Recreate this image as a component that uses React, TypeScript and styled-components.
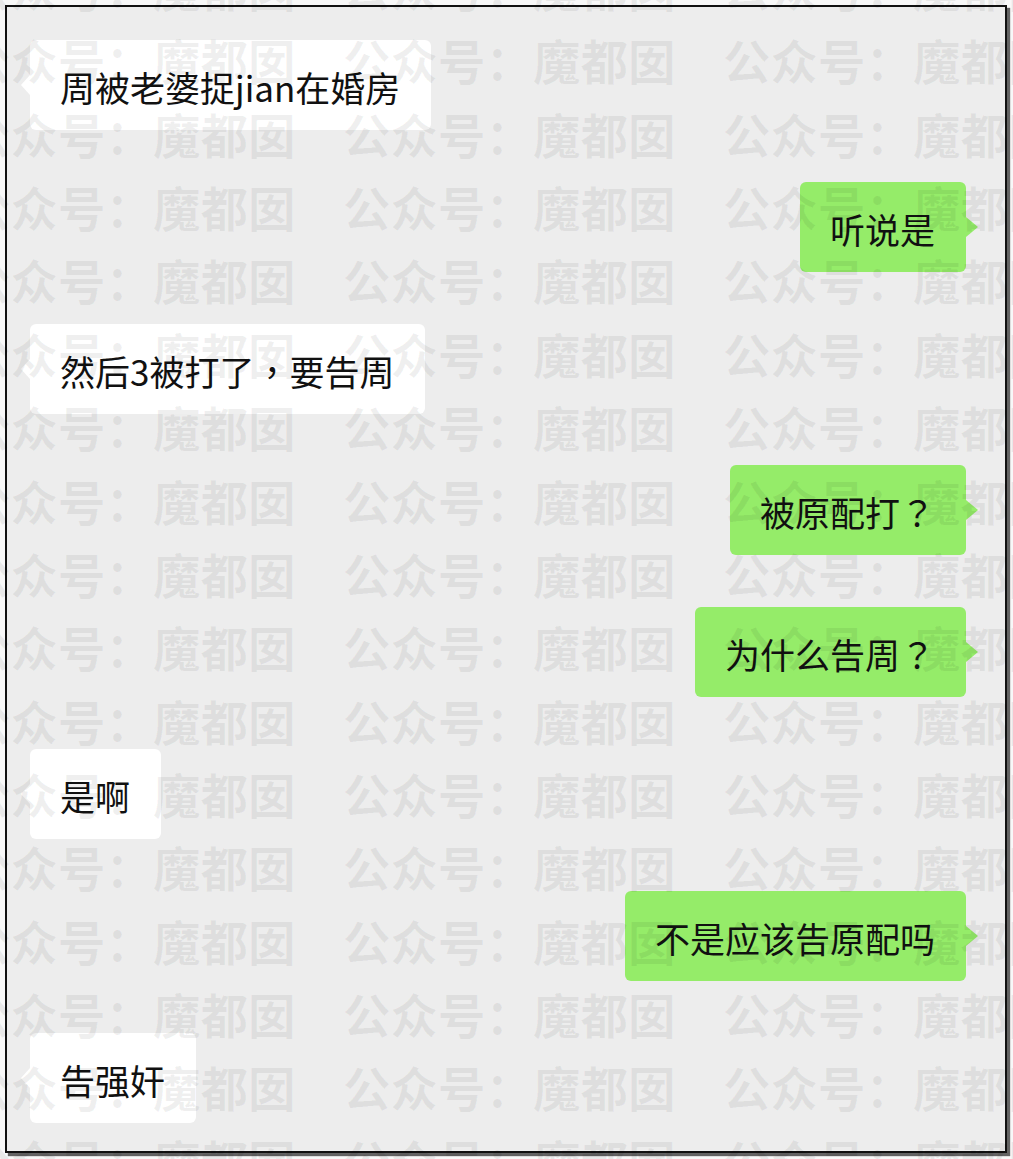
import * as React from 'react'
import styled, { createGlobalStyle, css } from 'styled-components'

type Side = 'left' | 'right'

interface Message {
  side: Side
  text: string
}

const messages: Message[] = [
  { side: 'left', text: '周被老婆捉jian在婚房' },
  { side: 'right', text: '听说是' },
  { side: 'left', text: '然后3被打了，要告周' },
  { side: 'right', text: '被原配打？' },
  { side: 'right', text: '为什么告周？' },
  { side: 'left', text: '是啊' },
  { side: 'right', text: '不是应该告原配吗' },
  { side: 'left', text: '告强奸' },
]

const GlobalStyle = createGlobalStyle`
  html, body {
    margin: 0;
    padding: 0;
    background: #f8f8f8;
  }
  body {
    font-family: "Noto Sans CJK SC", "Noto Sans", sans-serif;
  }
`

const Page = styled.div`
  position: relative;
  width: 1013px;
  height: 1159px;
  padding: 5px;
  box-sizing: border-box;
  overflow: hidden;
`

const Frame = styled.section`
  width: 1002px;
  height: 1148px;
  box-sizing: border-box;
  border: 2px solid #111;
  box-shadow: 3px 3px 1px rgba(0, 0, 0, 0.6);
  background: #ededed;
  padding: 33px 39px 0 23px;
  display: flex;
  flex-direction: column;
  gap: 51.8px;
`

const Row = styled.div<{ $side: Side }>`
  display: flex;
  justify-content: ${(p) => (p.$side === 'right' ? 'flex-end' : 'flex-start')};
`

const Bubble = styled.div<{ $side: Side }>`
  position: relative;
  height: 90px;
  box-sizing: border-box;
  padding: 25px 31px 21px 30px;
  border-radius: 6px;
  font-size: 35px;
  line-height: 44px;
  color: #111;
  white-space: nowrap;
  background: ${(p) => (p.$side === 'right' ? '#95ec69' : '#ffffff')};

  &::after {
    content: '';
    position: absolute;
    top: 50%;
    transform: translateY(-50%);
    border-top: 10px solid transparent;
    border-bottom: 10px solid transparent;
    ${(p) =>
      p.$side === 'right'
        ? css`
            right: -12px;
            border-left: 12px solid #95ec69;
          `
        : css`
            left: -9px;
            border-right: 9px solid #ffffff;
          `}
  }
`

// full-width punctuation drawn centred in its cell, like the original
const Punct = styled.span`
  font-family: "Noto Sans CJK TC", "Noto Sans CJK SC", sans-serif;
`

// watermark sits over the whole screenshot
const Watermark = styled.div`
  position: absolute;
  top: -50px;
  left: -37px;
  pointer-events: none;
  z-index: 2;
`

const MarkRow = styled.div`
  height: 73.36px;
  line-height: 73.36px;
  font-size: 47.5px;
  font-weight: 700;
  white-space: nowrap;
  color: rgba(0, 0, 0, 0.06);
`

const markText = '公众号：魔都囡　'.repeat(4)

function renderText(text: string) {
  return text.split(/([，？])/).map((part, i) =>
    part === '，' || part === '？' ? <Punct key={i}>{part}</Punct> : part
  )
}

function App() {
  return (
    <Page>
      <GlobalStyle />
      <Frame>
        {messages.map((m, i) => (
          <Row key={i} $side={m.side}>
            <Bubble $side={m.side}>{renderText(m.text)}</Bubble>
          </Row>
        ))}
      </Frame>
      <Watermark>
        {Array.from({ length: 18 }).map((_, i) => (
          <MarkRow key={i}>{markText}</MarkRow>
        ))}
      </Watermark>
    </Page>
  )
}

export default App
